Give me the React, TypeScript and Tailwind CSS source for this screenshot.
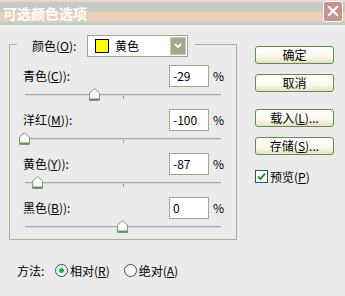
import React from "react";

const font = { fontFamily: '"Noto Sans CJK SC", "Noto Sans", sans-serif' };

function Thumb({ value }: { value: number }) {
  const left = 14 + ((value + 100) / 200) * 196 - 5;
  return (
    <svg className="absolute top-[1px]" style={{ left }} width="11" height="13" viewBox="0 0 11 13">
      <path d="M5.5 0.5 L10.5 5 L10.5 12.5 L0.5 12.5 L0.5 5 Z" fill="#fcfcfc" stroke="#8c8c8c" />
      <path d="M1 10.5 H10 V12 H1 Z" fill="#54a63c" />
    </svg>
  );
}

function SliderRow({ label, hot, rest, value, last }: { label: string; hot: string; rest: string; value: number; last?: boolean }) {
  return (
    <div className={last ? "h-[41px]" : "h-[44px]"}>
      <div className="flex items-center h-[22px] pl-[13px]">
        <div className="w-[146px] text-[12px] leading-none">
          {label}(<span className="underline">{hot}</span>){rest}
        </div>
        <div className="w-[40px] h-[22px] border border-[#a6a690] bg-white flex items-center px-[3px] text-[12px]">{value}</div>
        <div className="ml-[4px] text-[12px]">%</div>
      </div>
      <div className="relative h-[16px]">
        <div className="absolute left-[15px] top-[7px] w-[196px] h-[2px] border-t border-[#a8a8a8] border-b-white bg-[#d8d8d8]" />
        <div className="absolute left-[113px] top-[9px] w-px h-[3px] bg-[#9a9a9a]" />
        <Thumb value={value} />
      </div>
    </div>
  );
}

function Btn({ children }: { children: React.ReactNode }) {
  return (
    <div className="w-[79px] h-[18px] rounded-[3px] border border-[#5f9142] bg-[linear-gradient(to_bottom,#ffffff,#fbf8ee_60%,#e6dfc8)] flex items-center justify-center text-[12px] leading-none">
      {children}
    </div>
  );
}

export default function App() {
  return (
    <div className="w-[345px] h-[296px] bg-[#ebebeb] text-black overflow-hidden" style={font}>
      <div className="h-[25px] flex items-center justify-between pl-[3px] pr-[2px] bg-[linear-gradient(to_bottom,#dae8d4_0px,#f0d2c6_1px,#f0d2c6_2px,#c9c9c9_2px,#c9c9c9_10px,#b9dcb7_10px,#b9dcb7_12px,#f2cbbb_12px,#f2cbbb_21px,#bcdcbc_21px,#bcdcbc_23px,#c8c8c8_23px)]">
        <div className="text-white font-bold text-[14px] leading-none">可选颜色选项</div>
        <div className="w-[20px] h-[21px] mb-[3px] rounded-[3px] border border-white bg-[#c8928e] flex items-center justify-center">
          <svg width="12" height="12" viewBox="0 0 12 12">
            <path d="M2 2 L10 10 M10 2 L2 10" stroke="white" strokeWidth="2.2" strokeLinecap="square" />
          </svg>
        </div>
      </div>

      <div className="flex">
        <div className="ml-[9px] mt-[19px] w-[228px] h-[196px] border border-[#acac98]">
          <div className="-mt-[10px] ml-[7px] pl-[15px] pr-[7px] w-fit bg-[#ebebeb] flex items-center h-[22px]">
            <div className="w-[55px] text-[12px] leading-none">
              颜色(<span className="underline">O</span>):
            </div>
            <div className="w-[101px] h-[22px] border border-[#a6a690] bg-white flex items-center pl-[7px] pr-[1px]">
              <div className="w-[14px] h-[14px] bg-[#ffff00] border border-black" />
              <div className="ml-[6px] text-[12px] flex-1">黄色</div>
              <div className="w-[16px] h-[18px] bg-[#a7a78c] border border-[#c8c8b4] flex items-center justify-center">
                <svg width="8" height="6" viewBox="0 0 8 6">
                  <path d="M1 1 L4 4 L7 1" stroke="white" strokeWidth="1.8" fill="none" />
                </svg>
              </div>
            </div>
          </div>
          <div className="mt-[8px]">
            <SliderRow label="青色" hot="C" rest="):" value={-29} />
            <SliderRow label="洋红" hot="M" rest="):" value={-100} />
            <SliderRow label="黄色" hot="Y" rest="):" value={-87} />
            <SliderRow label="黑色" hot="B" rest="):" value={0} last />
          </div>
        </div>

        <div className="ml-[18px] mt-[21px] flex flex-col">
          <Btn>确定</Btn>
          <div className="mt-[10px]">
            <Btn>取消</Btn>
          </div>
          <div className="mt-[17px]">
            <Btn>载入(<span className="underline">L</span>)...</Btn>
          </div>
          <div className="mt-[10px]">
            <Btn>存储(<span className="underline">S</span>)...</Btn>
          </div>
          <div className="mt-[15px] flex items-center">
            <div className="w-[13px] h-[13px] border border-[#1c5180] bg-white flex items-center justify-center">
              <svg width="9" height="9" viewBox="0 0 9 9">
                <path d="M1 4.5 L3.5 7 L8 1.5" stroke="#21a121" strokeWidth="2" fill="none" />
              </svg>
            </div>
            <div className="ml-[2px] text-[12px] leading-none">
              预览(<span className="underline">P</span>)
            </div>
          </div>
        </div>
      </div>

      <div className="mt-[24px] ml-[17px] flex items-center text-[12px] leading-none">
        <div className="w-[38px]">方法:</div>
        <div className="w-[13px] h-[13px] rounded-full border border-[#1c5180] bg-white flex items-center justify-center">
          <div className="w-[5px] h-[5px] rounded-full bg-[#2ab02a]" />
        </div>
        <div className="ml-[2px]">
          相对(<span className="underline">R</span>)
        </div>
        <div className="ml-[14px] w-[13px] h-[13px] rounded-full border border-[#1c5180] bg-white" />
        <div className="ml-[2px]">
          绝对(<span className="underline">A</span>)
        </div>
      </div>
    </div>
  );
}
